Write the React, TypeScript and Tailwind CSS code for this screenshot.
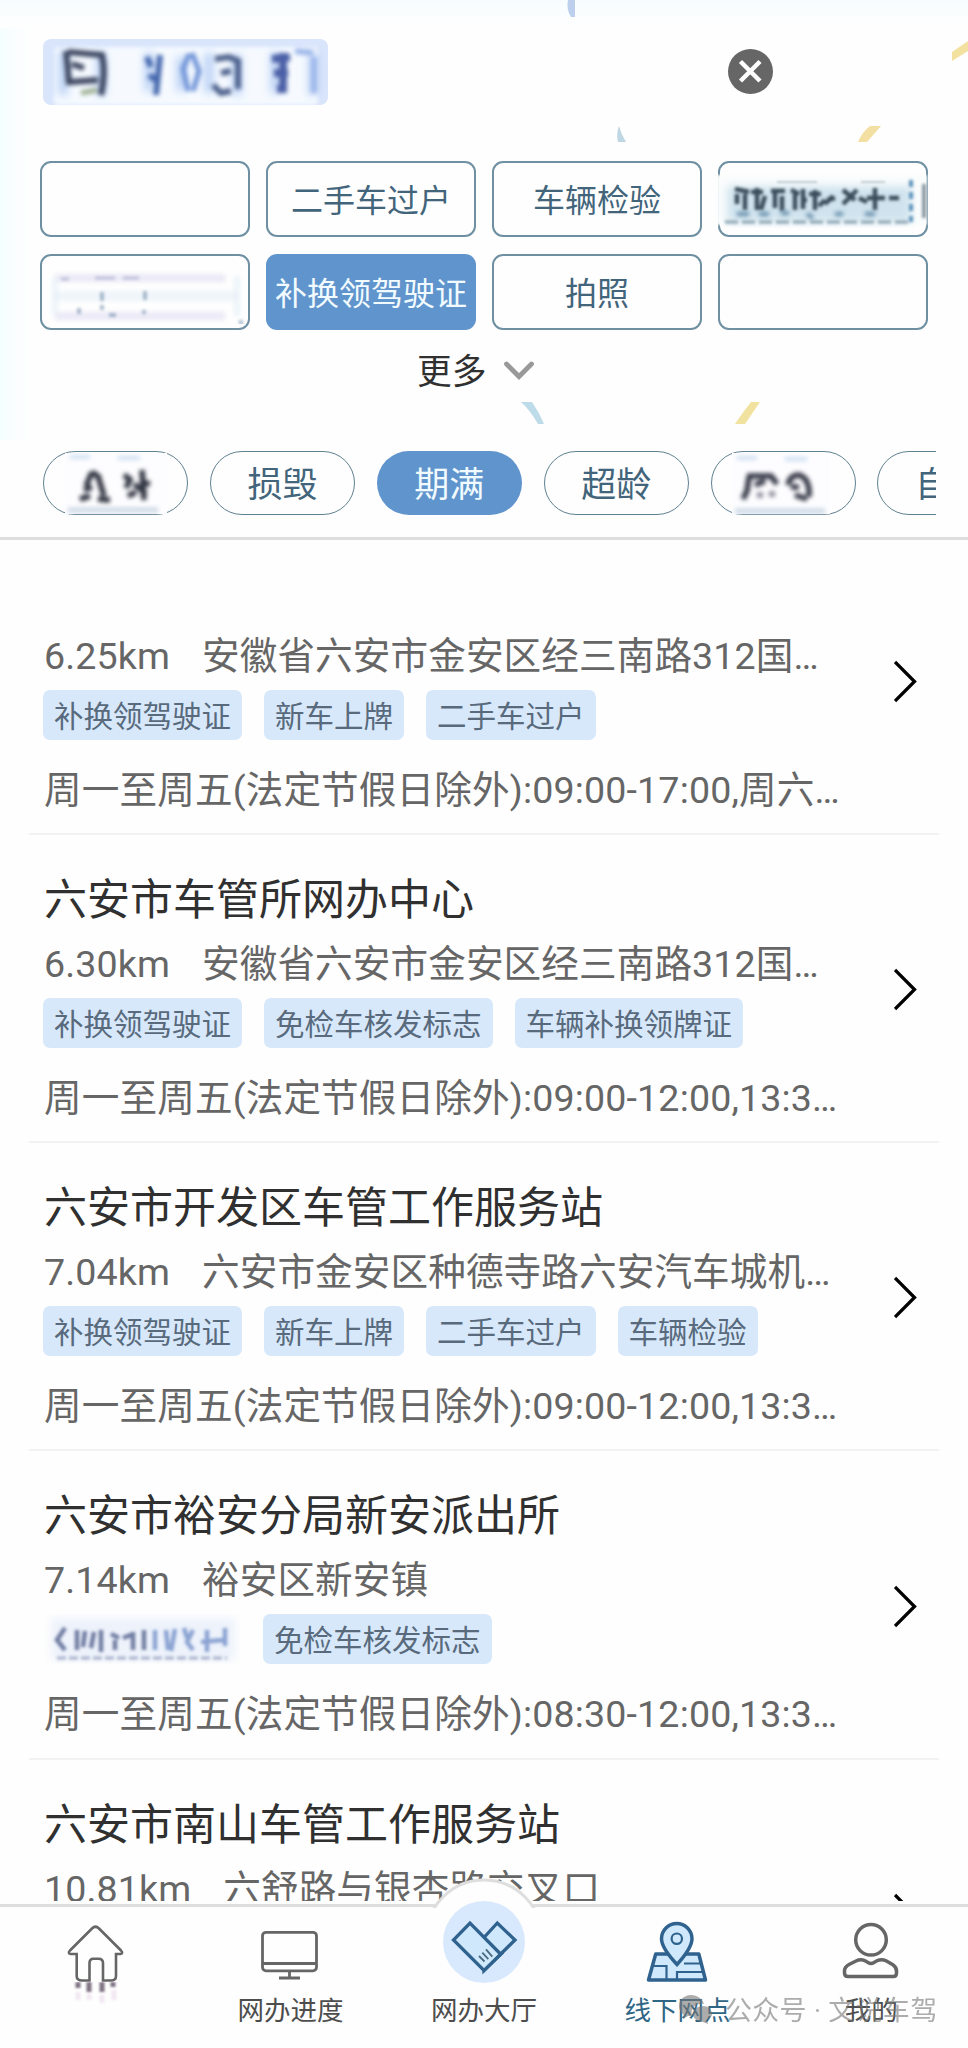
import type { ReactNode } from "react";

type Office = {
  name: string;
  distance: string;
  address: string;
  tags: (string | null)[];
  hours: string;
};

const offices: Office[] = [
  {
    name: "",
    distance: "6.25km",
    address: "安徽省六安市金安区经三南路312国…",
    tags: ["补换领驾驶证", "新车上牌", "二手车过户"],
    hours: "周一至周五(法定节假日除外):09:00-17:00,周六…",
  },
  {
    name: "六安市车管所网办中心",
    distance: "6.30km",
    address: "安徽省六安市金安区经三南路312国…",
    tags: ["补换领驾驶证", "免检车核发标志", "车辆补换领牌证"],
    hours: "周一至周五(法定节假日除外):09:00-12:00,13:3…",
  },
  {
    name: "六安市开发区车管工作服务站",
    distance: "7.04km",
    address: "六安市金安区种德寺路六安汽车城机…",
    tags: ["补换领驾驶证", "新车上牌", "二手车过户", "车辆检验"],
    hours: "周一至周五(法定节假日除外):09:00-12:00,13:3…",
  },
  {
    name: "六安市裕安分局新安派出所",
    distance: "7.14km",
    address: "裕安区新安镇",
    tags: [null, "免检车核发标志"],
    hours: "周一至周五(法定节假日除外):08:30-12:00,13:3…",
  },
  {
    name: "六安市南山车管工作服务站",
    distance: "10.81km",
    address: "六舒路与银杏路交叉口",
    tags: [],
    hours: "",
  },
];

/* Redacted values are shown as soft ink smudges. */

function SearchSmudge() {
  return (
    <svg viewBox="0 0 285 66" className="h-[66px] w-[285px]" fill="none">
      <rect x="11" y="8" width="264" height="58" rx="4" fill="#f6faff" className="blur-[2px]" />
      <g className="blur-[4px]" stroke="#a3c2f2" strokeWidth="9">
        <path d="M20 12v44M58 14v42M106 14v38M138 18v34M166 14v40M194 16v40M232 14v40M270 14v42" opacity=".75" />
      </g>
      <g className="blur-[2.2px]">
        <path d="M23 12q2 18 3 34M25 13l34 3q4 18 -1 40M29 25l12 4M27 43l28-2" stroke="#3b4560" strokeWidth="6" />
        <path d="M38 54l16-3" stroke="#9fb093" strokeWidth="5" />
        <path d="M104 18l4 10M117 16l-4 40M106 36l8 6" stroke="#4467ad" strokeWidth="6" />
        <path d="M146 15l-6 15 5 22M149 14l7 18-6 20" stroke="#6b90d6" strokeWidth="5" />
        <path d="M172 20l14-2 9 4v28M178 34l10-2M170 46l8 8 10-2" stroke="#4a5f8a" strokeWidth="6" />
        <path d="M229 20l18-2M240 14v40M231 34h14M234 50h10" stroke="#4a5fa6" strokeWidth="8" />
        <path d="M252 12l18 2M271 18v36" stroke="#9db7ea" strokeWidth="6" />
      </g>
    </svg>
  );
}

function DenseSmudge() {
  return (
    <svg viewBox="0 0 218 56" className="absolute -left-[5px] top-[9px] h-[56px] w-[218px]" fill="none">
      <rect x="2" y="3" width="210" height="50" fill="#fbfdfd" className="blur-[1px]" />
      <rect x="12" y="14" width="184" height="36" fill="#cfe3ee" className="blur-[4px]" />
      <path d="M10 50h186" stroke="#8aa2b0" strokeWidth="3" strokeDasharray="13 4" className="blur-[1.5px]" />
      <g className="blur-[1.8px]" stroke="#3a4c5a" strokeWidth="4.500">
        <path d="M20 17l14 3M22 22v10M30 18v20M36 20h12M42 16v22M50 24l-4 14M56 19h14M60 18v18M67 24v15M76 18l8 4M80 22v16M86 28h6M88 17v20M94 22h12M100 18v20M104 34l6-6M112 28l8-2M118 24l-8 8M128 18l12 10M142 18l-14 14M144 26l8 4M160 16v22M152 26h18M174 26h10" />
      </g>
      <path d="M22 42h12M44 42h10M66 41h8M92 42l6 4M120 42h8M150 42h10" stroke="#6289a6" strokeWidth="4" className="blur-[2px]" />
      <path d="M196 8v42" stroke="#5b92ba" strokeWidth="4" strokeDasharray="7 5" className="blur-[1.8px]" />
      <path d="M209 12v34" stroke="#8797a0" strokeWidth="4" className="blur-[1.6px]" />
      <path d="M62 10h40M146 10h24" stroke="#c0ccd3" strokeWidth="2" className="blur-[1px]" />
    </svg>
  );
}

function FaintSmudge() {
  return (
    <svg viewBox="0 0 200 60" className="h-[60px] w-[200px]" fill="none">
      <g className="blur-[2.5px]">
        <path d="M10 14h170M10 52h170" stroke="#e8e6f5" strokeWidth="7" />
        <path d="M10 32h180" stroke="#eff5fa" strokeWidth="10" />
        <path d="M10 14v36M192 12v40" stroke="#e4eff6" strokeWidth="4" />
      </g>
      <g className="blur-[1.5px]" opacity=".5">
        <path d="M50 14h20M78 14h16M16 15h8" stroke="#a9abcb" strokeWidth="4" />
        <path d="M57 28v9M57 41v5M100 27v9M34 44v6M64 51h7M99 46v4M196 56v5" stroke="#5e7fa0" strokeWidth="4" />
      </g>
    </svg>
  );
}

function PillSmudge({ kind }: { kind: "a" | "b" }) {
  return (
    <svg
      viewBox="0 0 104 66"
      className={kind === "a" ? "absolute -top-[2px] left-[20px] h-[66px] w-[104px]" : "absolute -top-[1px] left-[19px] h-[66px] w-[104px]"}
      fill="none"
    >
      <rect x="1" y={kind === "a" ? 3 : 2} width={kind === "a" ? 102 : 98} height="61" fill="#fdfdff" />
      <path d="M6 7h20M54 8h22" stroke="#cfdff1" strokeWidth="4" className="blur-[2px]" />
      <path d="M4 60h90" stroke="#cdd8e5" strokeWidth="5" className="blur-[2px]" />
      {kind === "a" ? (
        <g className="blur-[2px]" stroke="#2f3340" strokeWidth="5.500">
          <path d="M28 22l8 6M28 22l-6 14M34 26l6 20M20 40l8-3M16 49l10-3M34 49l12 1" />
          <path d="M60 25l8 6M66 30l-4 8M78 20l2 30M64 46l8-4M76 32l10 2M70 34l12 10" />
        </g>
      ) : (
        <g className="blur-[2px]" stroke="#343746" strokeWidth="5.500">
          <path d="M16 25h24l6 8M18 26l-2 14-4 8M24 34l10-4" />
          <path d="M26 44h6M38 43h6" stroke="#8a8898" />
          <path d="M57 34q2-10 11-10 8 2 10 14v8M60 36h8M64 44l12 4" />
        </g>
      )}
    </svg>
  );
}

function TagSmudge() {
  return (
    <svg viewBox="0 0 198 50" className="h-[50px] w-[198px]" fill="none">
      <rect x="8" y="4" width="184" height="42" fill="#edf2fb" className="blur-[4px]" />
      <path d="M14 44h170" stroke="#a5aecb" strokeWidth="3" strokeDasharray="9 3" className="blur-[1.5px]" />
      <g className="blur-[1.8px]" stroke="#5d6a94" strokeWidth="4.500">
        <path d="M22 14l-8 12 8 10M34 16v20M42 17l-2 16M48 34l3-16M58 16v22M68 20l8 4M72 26v10M80 24l10-4M90 18v18M101 16v20" opacity=".85" />
        <path d="M112 16v20M123 16l2 20M132 15l-4 22M141 14l3 10M150 16l-6 12 6 8M164 16v22M158 28l22-2M182 14v18" stroke="#7390c8" opacity=".8" />
      </g>
    </svg>
  );
}

function HomeLabelSmudge() {
  return (
    <svg viewBox="0 0 80 40" className="h-[40px] w-[80px]" fill="none">
      <g className="blur-[1px]" strokeWidth="5">
        <path d="M21 0v6M32 0v10M45 0v10M56 0v5" stroke="#7d7182" />
        <path d="M21 10v8M32 12v6M45 13v8M57 8v10" stroke="#f1e8f2" />
      </g>
    </svg>
  );
}

function Service({ active = false, children }: { active?: boolean; children?: ReactNode }) {
  return (
    <div
      className={
        active
          ? "flex h-[76px] items-center justify-center rounded-[11px] bg-[#6094cc] pt-[4px] text-[32px] whitespace-nowrap text-[#f1fbff]"
          : "relative flex h-[76px] items-center justify-center rounded-[11px] border-2 border-[#6f90a2] bg-[#fefefe] pt-[4px] text-[32px] whitespace-nowrap text-[#42657b]"
      }
    >
      {children}
    </div>
  );
}

function Pill({ active = false, children }: { active?: boolean; children?: ReactNode }) {
  return (
    <div
      className={
        active
          ? "flex h-[64px] w-[145px] shrink-0 items-center justify-center rounded-full bg-[#6094cc] pt-[6px] text-[35px] text-[#f1fbff]"
          : "relative flex h-[64px] w-[145px] shrink-0 items-center justify-center rounded-full border border-[#5f8091] bg-[#fefefe] pt-[6px] text-[35px] text-[#42657b]"
      }
    >
      {children}
    </div>
  );
}

function Backdrop() {
  return (
    <svg viewBox="0 0 968 537" className="absolute inset-0 h-[537px] w-[968px]" fill="none">
      <path d="M568 0h7v17h-4q-5-8-3-17z" fill="#bccfec" />
      <path d="M619 126q2 8 7 16h-8q-2-8 1-16z" fill="#bfd6e3" />
      <path d="M968 41v10l-16 10v-9z" fill="#f3e1a0" />
      <path d="M870 126h11l-14 16h-9q4-10 12-16z" fill="#f3dfa2" />
      <path d="M521 402h11q7 10 12 22h-6q-8-14-17-22z" fill="#bddbe9" />
      <path d="M751 402h9l-15 22h-10q8-12 16-22z" fill="#f2e2a0" />
    </svg>
  );
}

function OfficeRow({ office }: { office: Office }) {
  return (
    <li className="mx-[29px] flex h-[308.33px] shrink-0 items-center border-b-2 border-[#f2f2f2] pl-[15px]">
      <div className="flex h-full w-[850px] flex-col pt-[40px]">
        <h2 className="h-[50px] text-[43px] leading-[50px] whitespace-nowrap text-[#303030]">{office.name}</h2>
        <p className="mt-[14px] flex h-[50px] gap-[32px] text-[37.6px] leading-[50px] tracking-[0.12px] whitespace-nowrap text-[#666]">
          <span>{office.distance}</span>
          <span>{office.address}</span>
        </p>
        <div className="mt-[9px] -ml-px flex h-[50px] gap-[22px]">
          {office.tags.map((tag, i) =>
            tag ? (
              <span
                key={i}
                className="rounded-[7px] bg-[#d7e8fb] px-[11px] pt-[2px] text-[29.5px] leading-[50px] whitespace-nowrap text-[#586a7c]"
              >
                {tag}
              </span>
            ) : (
              <TagSmudge key={i} />
            ),
          )}
        </div>
        <p className="mt-[25px] h-[50px] text-[37.6px] leading-[50px] tracking-[0.15px] whitespace-nowrap text-[#666]">
          {office.hours}
        </p>
      </div>
      <svg viewBox="0 0 24 44" className="mt-[2px] h-[44px] w-[24px] shrink-0" fill="none" stroke="#000" strokeWidth="3.300">
        <path d="M1 3 20.500 22.500 1 42" />
      </svg>
    </li>
  );
}

function NavItem({ icon, label, active = false }: { icon: ReactNode; label?: string; active?: boolean }) {
  return (
    <div className="flex flex-1 flex-col items-center pt-[14px]">
      {icon}
      {label ? (
        <span
          className={
            active
              ? "mt-[8px] text-[26.500px] leading-[36px] text-[#2f6585]"
              : "mt-[8px] text-[26.500px] leading-[36px] text-[#4d4d4d]"
          }
        >
          {label}
        </span>
      ) : (
        <HomeLabelSmudge />
      )}
    </div>
  );
}

function HomeIcon() {
  return (
    <svg viewBox="0 0 64 61" className="h-[61px] w-[64px]" fill="none" stroke="#666" strokeWidth="2.600">
      <path d="M24.500 59.500H17Q11.700 59.500 11.700 55V33H5.500Q2.500 32.500 5 29.500L27 7.500Q30.500 4 34 7.500L56 29.500Q58.500 32.500 55.500 33H51V55Q51 59.500 46 59.500H38V42Q38 37.700 33.500 37.700H28.500Q24.500 37.700 24.500 42Z" />
    </svg>
  );
}

function MonitorIcon() {
  return (
    <svg viewBox="0 0 64 64" className="size-[64px]" fill="none" stroke="#666" strokeWidth="2.800">
      <rect x="4.500" y="11.300" width="54" height="38.500" rx="3.500" />
      <path d="M4.500 42.500h54M31.500 50v7M21 57h21" />
    </svg>
  );
}

function MapIcon() {
  return (
    <svg viewBox="0 0 64 64" className="size-[64px]" fill="#cfe8fb" stroke="#2f628e" strokeWidth="3.500">
      <path d="M9.700 33H52.800L59.500 59H2.500Z" strokeLinejoin="round" />
      <path d="M7.400 45H20.500V59M31 59V51H57M38 42.500H54" fill="none" strokeWidth="2.200" />
      <path d="M31 43.500Q15.500 27 15.500 17.800A15.200 15.200 0 0 1 46 17.800Q46 27 31 43.500Z" />
      <circle cx="30.800" cy="17.700" r="5.200" strokeWidth="2.200" />
    </svg>
  );
}

function UserIcon() {
  return (
    <svg viewBox="0 0 64 64" className="size-[64px]" fill="none" stroke="#666" strokeWidth="3.500">
      <circle cx="32" cy="18.800" r="15.300" />
      <path d="M9 55.500H54.500Q57.500 55.500 57.500 52V50Q57.500 46 53.500 43.500L47 39.800Q42.500 37.500 38 39.800L35 41.500Q32 43.300 29 41.500L26 39.800Q21.500 37.500 17.500 39.800L10 43.500Q5.500 46 5.500 50V52Q5.500 55.500 9 55.500Z" />
    </svg>
  );
}

function HandshakeIcon() {
  return (
    <svg viewBox="0 0 82 82" className="-mt-[20px] mb-[2px] size-[82px]" fill="none" stroke="#2f628e" strokeWidth="3.300">
      <circle cx="41" cy="41" r="41" fill="#d9e9fd" stroke="none" />
      <path d="M41 36.500 54.300 22 72 39 41 69.500Z" fill="#cfe8fb" />
      <path d="M10.500 39 27 22 57 51 41 69.500Z" fill="#cfe8fb" stroke="none" />
      <path d="M57 52.500 27 22 10.500 39 41 69.500 60 51" />
      <path d="M36 55l5.500 5.500M39.300 51.700l6 6.500M43 48.300l6.300 7.400" stroke="#4a6a80" strokeWidth="1.800" />
    </svg>
  );
}

export default function App() {
  return (
    <div className="flex h-[2048px] w-[968px] flex-col overflow-hidden bg-[#fefefe] font-[Roboto,'Noto_Sans_CJK_SC',sans-serif]">
      <header className="relative h-[540px] shrink-0 border-b-[3px] border-[#dedede] bg-[#fefefe]">
        <div className="absolute top-0 left-0 h-[440px] w-[30px] bg-linear-to-r from-[#f5feff] to-[#fefefe]" />
        <div className="absolute inset-x-0 top-0 h-[28px] bg-linear-to-b from-[#f7fdff] to-[#fefefe]" />
        <Backdrop />
        <div className="relative flex h-[126px] items-center pt-[18px] pl-[43px]">
          <div className="h-[66px] w-[285px] overflow-hidden rounded-[8px] bg-[#d9e5fb]">
            <SearchSmudge />
          </div>
          <svg viewBox="0 0 45 45" className="-mt-[2px] ml-[400px] size-[45px]">
            <circle cx="22.500" cy="22.500" r="22.500" fill="#666" />
            <path d="M12.500 12.500 32 32M32 12.500 12.500 32" stroke="#fff" strokeWidth="4.500" />
          </svg>
        </div>
        <div className="relative mt-[35px] ml-[40px] grid w-[888px] grid-cols-4 gap-x-[16px] gap-y-[17px]">
          <Service />
          <Service>二手车过户</Service>
          <Service>车辆检验</Service>
          <Service>
            <DenseSmudge />
          </Service>
          <Service>
            <FaintSmudge />
          </Service>
          <Service active>补换领驾驶证</Service>
          <Service>拍照</Service>
          <Service />
        </div>
        <div className="relative mt-[16px] flex h-[50px] items-center pt-[2px] pl-[417px] text-[34.700px] leading-[50px] text-[#303030]">
          更多
          <svg viewBox="0 0 34 24" className="ml-[16px] h-[24px] w-[34px]" fill="none" stroke="#999" strokeWidth="4.800" strokeLinecap="round">
            <path d="M4.500 4 17 16.500 29.500 4" />
          </svg>
        </div>
        <div className="relative mt-[55px] ml-[43px] flex w-[893px] gap-[21.900px] overflow-hidden">
          <Pill>
            <PillSmudge kind="a" />
          </Pill>
          <Pill>损毁</Pill>
          <Pill active>期满</Pill>
          <Pill>超龄</Pill>
          <Pill>
            <PillSmudge kind="b" />
          </Pill>
          <Pill>自理</Pill>
        </div>
      </header>

      <main className="h-[1361px] shrink-0 overflow-hidden">
        <ul className="-mt-[13.500px] flex flex-col">
          {offices.map((office, i) => (
            <OfficeRow key={i} office={office} />
          ))}
        </ul>
      </main>

      <nav className="relative mt-[3px] flex h-[144px] shrink-0 border-t-[3px] border-[#dedede] bg-[#fefefe]">
        <svg viewBox="0 0 120 30" className="absolute -top-[29px] left-[424px] h-[30px] w-[120px]">
          <circle cx="60" cy="60" r="58" fill="#fefefe" stroke="#dedede" strokeWidth="3" />
        </svg>
        <div className="relative flex w-full">
          <NavItem icon={<HomeIcon />} />
          <NavItem icon={<MonitorIcon />} label="网办进度" />
          <NavItem icon={<HandshakeIcon />} label="网办大厅" />
          <NavItem icon={<MapIcon />} label="线下网点" active />
          <NavItem icon={<UserIcon />} label="我的" />
        </div>
        <div className="absolute top-[86px] left-[679px] flex items-center text-[27px] leading-[36px] tracking-[0.3px] whitespace-nowrap text-[#777] opacity-60">
          <svg viewBox="0 0 34 30" className="-mt-[4px] mr-[12px] h-[30px] w-[34px]" fill="#777">
            <path d="M12 1C5 1 0 6 0 12c0 4 2 7 5 9l-1 4 5-3h4c-2-8 4-13 12-12C24 5 18 1 12 1z" />
            <path d="M24 12c-6 0-10 4-10 8s4 8 10 8l5 2-1-4c3-1 5-4 5-6 0-5-4-8-9-8z" />
          </svg>
          <span>公众号 · 文说车驾</span>
        </div>
      </nav>
    </div>
  );
}
